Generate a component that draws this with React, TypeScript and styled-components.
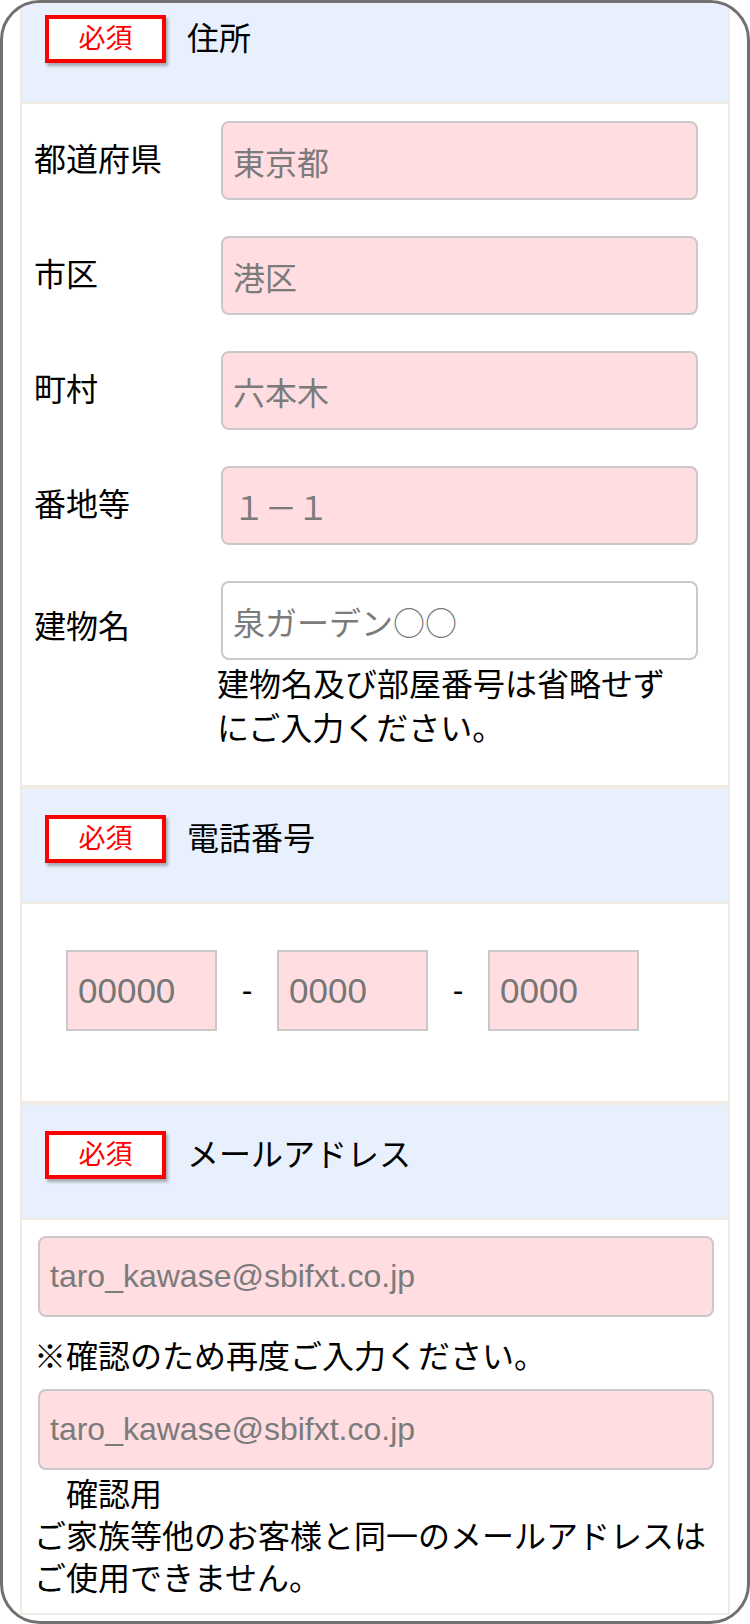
import React from 'react'
import styled, { createGlobalStyle } from 'styled-components'

const Global = createGlobalStyle`
  html, body {
    margin: 0;
    padding: 0;
    background: #fff;
  }
  body {
    width: 750px;
    font-family: "Liberation Sans", "Noto Sans CJK JP", sans-serif;
    color: #000;
  }
`

const Frame = styled.div`
  box-sizing: border-box;
  width: 750px;
  height: 1624px;
  border: 3px solid #707070;
  border-radius: 40px;
  overflow: hidden;
  padding: 0 17px;
  background: #fff;
`

// the page is scrolled a little, the first header is cut at the top
const Scroller = styled.div`
  margin-top: -16px;
`

const Section = styled.section`
  border: 2px solid #f1ebe5;
`

const Header = styled.div`
  display: flex;
  align-items: center;
  gap: 21px;
  padding: 26px 0 39px 23px;
  background: #e8f0fd;
  border-bottom: 2px solid #f1ebe5;
`

const Badge = styled.span`
  box-sizing: border-box;
  width: 121px;
  height: 48px;
  display: flex;
  align-items: center;
  justify-content: center;
  border: 4px solid #ff0000;
  background: #fff;
  color: #ff0000;
  font-size: 27px;
  line-height: 1;
  box-shadow: 2px 3px 3px rgba(0, 0, 0, 0.3);
`

const Title = styled.h2`
  margin: 0;
  font-size: 32px;
  font-weight: 400;
  line-height: 48px;
`

const AddressBody = styled.div`
  display: flex;
  flex-direction: column;
  gap: 36px;
  padding: 17px 30px 34px 12px;
`

const Row = styled.div`
  display: flex;
  align-items: flex-start;
`

const Label = styled.label<{ $drop?: number }>`
  flex: 0 0 183px;
  font-size: 32px;
  line-height: 79px;
  padding-top: ${p => p.$drop ?? 0}px;
`

const Field = styled.div`
  flex: 1;
  min-width: 0;
  display: flex;
  flex-direction: column;
`

const TextInput = styled.input<{ $empty?: boolean; $tall?: boolean; $cjk?: boolean }>`
  box-sizing: border-box;
  width: calc(100% - 4px);
  height: ${p => (p.$tall ? 81 : 79)}px;
  margin: 0 0 0 4px;
  padding: 0 10px;
  border: 2px solid #c9c9c9;
  border-radius: 8px;
  background: ${p => (p.$empty ? '#fff' : '#ffdde0')};
  font-family: ${p =>
    p.$cjk
      ? '"Noto Sans CJK JP", sans-serif'
      : '"Liberation Sans", "Noto Sans CJK JP", sans-serif'};
  font-size: 32px;
  color: #333;
  outline: none;
  &::placeholder {
    color: #7b7b7b;
    opacity: 1;
  }
`

const Help = styled.p`
  margin: 3px 0 0;
  max-width: 470px;
  font-size: 32px;
  line-height: 44px;
`

const PhoneBody = styled.div`
  display: flex;
  align-items: center;
  padding: 46px 0 70px 44px;
`

const PhoneInput = styled.input`
  box-sizing: border-box;
  width: 151px;
  height: 81px;
  margin: 0;
  padding: 0 10px;
  border: 2px solid #c9c9c9;
  border-radius: 0;
  background: #ffdde0;
  font-family: "Liberation Sans", sans-serif;
  font-size: 35px;
  outline: none;
  &::placeholder {
    color: #767676;
    opacity: 1;
  }
`

const Dash = styled.span`
  width: 60px;
  text-align: center;
  font-size: 32px;
`

const MailBody = styled.div`
  padding: 16px 14px 13px 12px;
`

const Note = styled.p`
  margin: 18px 0 10px;
  font-size: 32px;
  line-height: 44px;
`

const Caution = styled.p`
  margin: 4px 0 0;
  font-size: 32px;
  line-height: 42px;
`

const Indent = styled.span`
  display: block;
  padding-left: 1em;
`

const address = [
  { label: '都道府県', value: '東京都' },
  { label: '市区', value: '港区' },
  { label: '町村', value: '六本木' },
  { label: '番地等', value: '１－１' },
]

const App: React.FC = () => {
  return (
    <>
      <Global />
      <Frame>
        <Scroller>
          <Section>
            <Header>
              <Badge>必須</Badge>
              <Title>住所</Title>
            </Header>
            <AddressBody>
              {address.map(a => (
                <Row key={a.label}>
                  <Label>{a.label}</Label>
                  <Field>
                    <TextInput $cjk placeholder={a.value} />
                  </Field>
                </Row>
              ))}
              <Row>
                <Label $drop={7}>建物名</Label>
                <Field>
                  <TextInput $empty $cjk placeholder="泉ガーデン○○" />
                  <Help>建物名及び部屋番号は省略せずにご入力ください。</Help>
                </Field>
              </Row>
            </AddressBody>
          </Section>

          <Section>
            <Header>
              <Badge>必須</Badge>
              <Title>電話番号</Title>
            </Header>
            <PhoneBody>
              <PhoneInput placeholder="00000" />
              <Dash>-</Dash>
              <PhoneInput placeholder="0000" />
              <Dash>-</Dash>
              <PhoneInput placeholder="0000" />
            </PhoneBody>
          </Section>

          <Section>
            <Header>
              <Badge>必須</Badge>
              <Title>メールアドレス</Title>
            </Header>
            <MailBody>
              <TextInput $tall placeholder="taro_kawase@sbifxt.co.jp" />
              <Note>※確認のため再度ご入力ください。</Note>
              <TextInput $tall placeholder="taro_kawase@sbifxt.co.jp" />
              <Caution>
                <Indent>確認用</Indent>
                ご家族等他のお客様と同一のメールアドレスはご使用できません。
              </Caution>
            </MailBody>
          </Section>
        </Scroller>
      </Frame>
    </>
  )
}

export default App
